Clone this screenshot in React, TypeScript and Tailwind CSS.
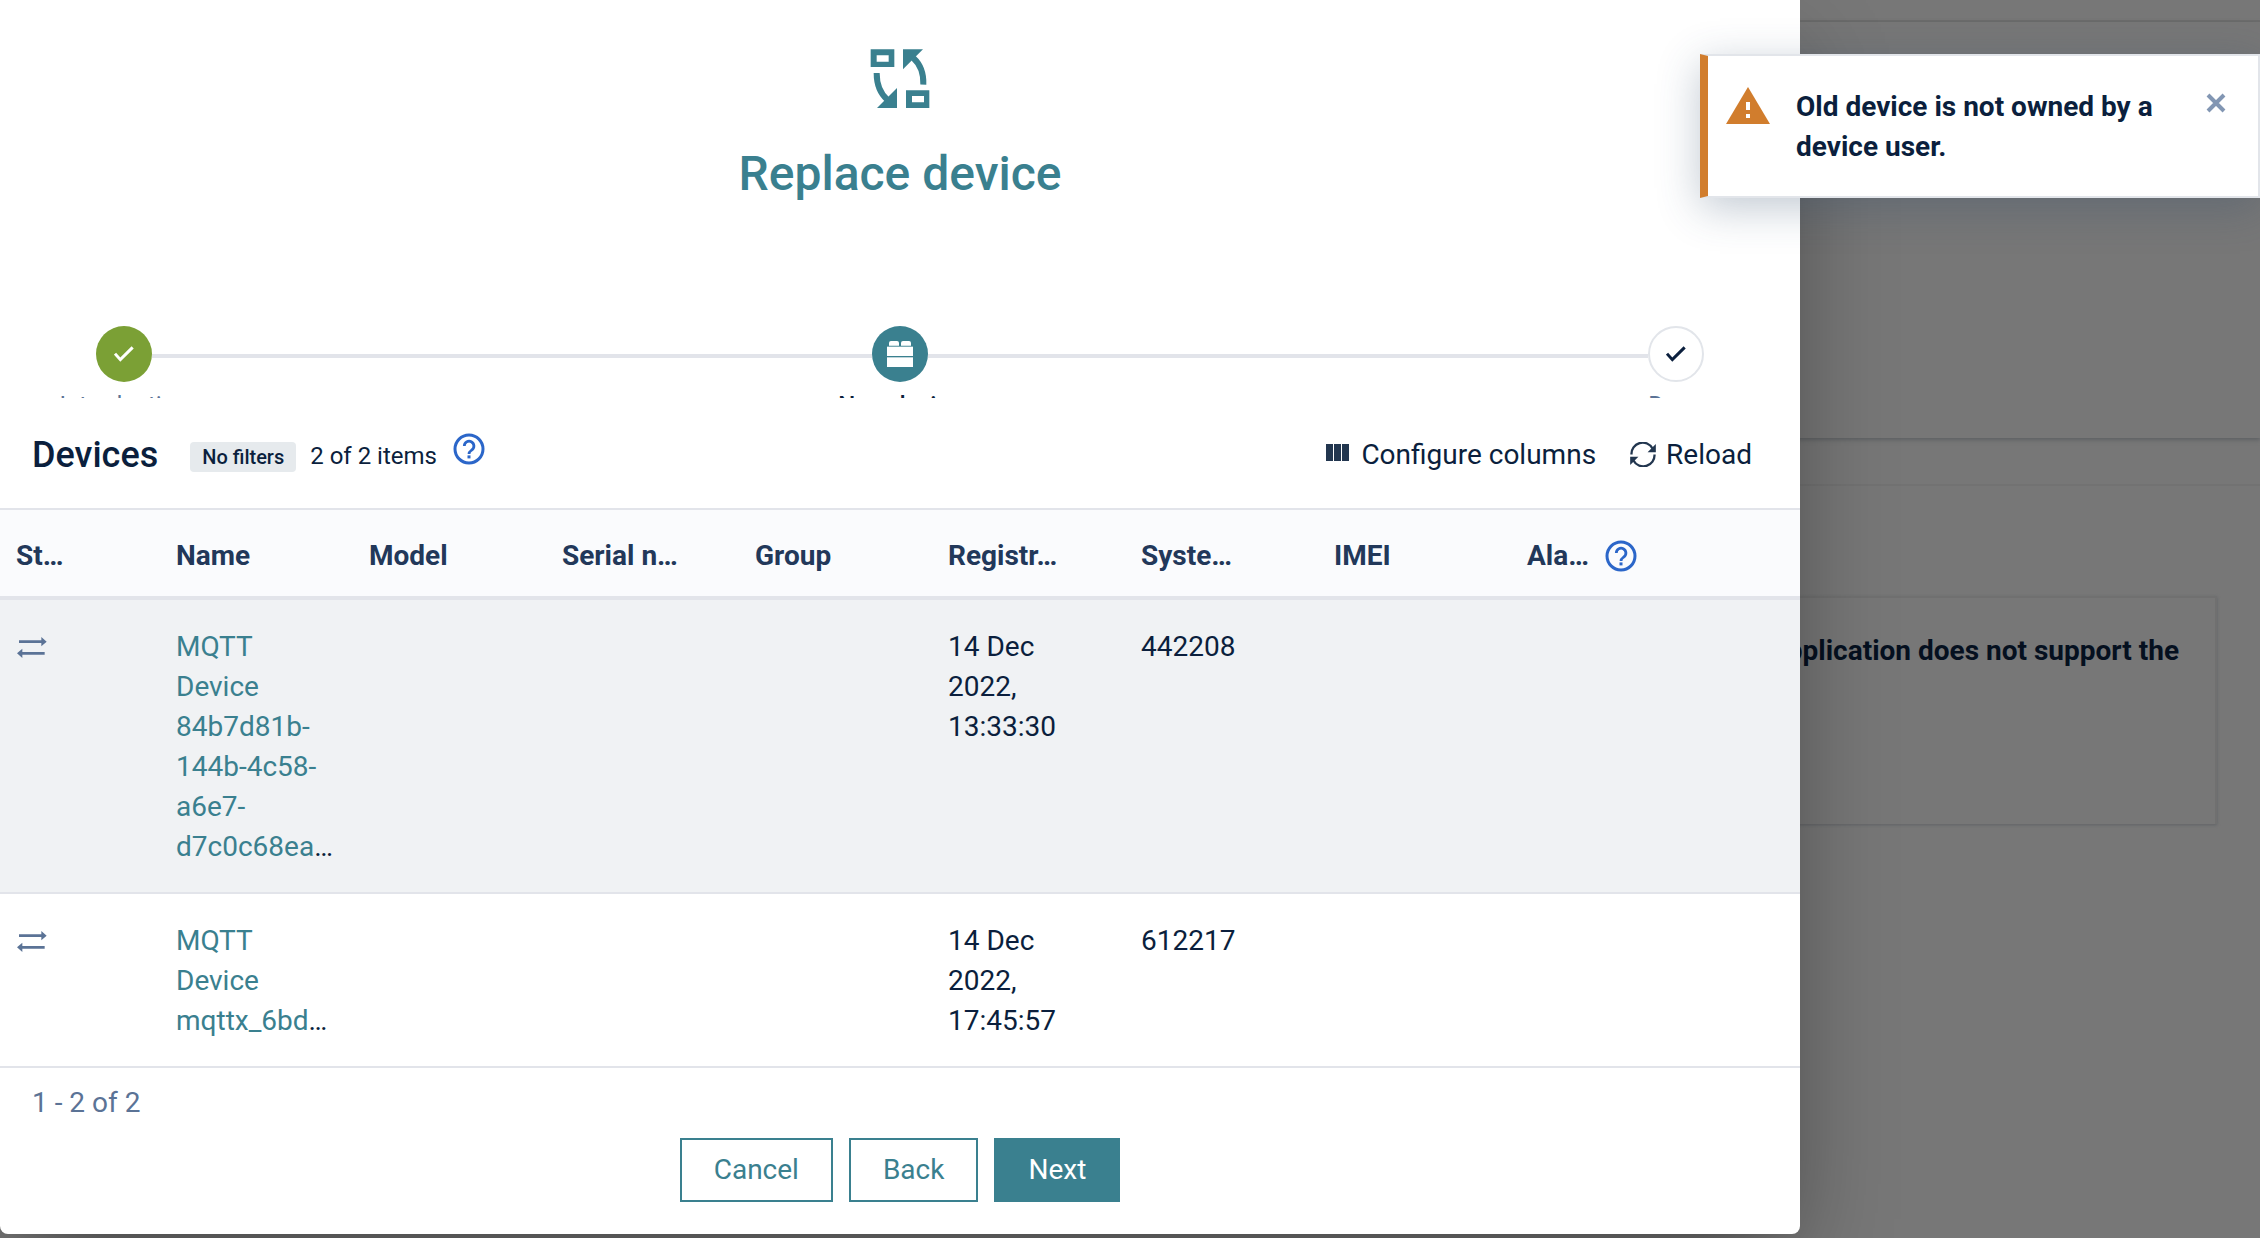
import React from "react";

const HelpIcon = () => (
  <svg viewBox="0 0 32 32" className="size-8" fill="none" aria-hidden="true">
    <circle cx="16" cy="16" r="14" stroke="#2b66c9" strokeWidth="3" />
    <path d="M11.3 13a4.8 4.8 0 1 1 7.6 3.9c-1.7 1.3-2.9 2-2.9 4" stroke="#2b66c9" strokeWidth="2.8" />
    <rect x="14.5" y="22.4" width="3" height="3" fill="#2b66c9" />
  </svg>
);

const CheckIcon = () => (
  <svg viewBox="0 0 60 48" className="h-4 w-5" fill="none" stroke="currentColor" strokeWidth="9" aria-hidden="true">
    <path d="M3 23l16 18L56 4" />
  </svg>
);

const BrickIcon = () => (
  <svg viewBox="0 0 78 81" className="h-[27px] w-[26px]" fill="currentColor" aria-hidden="true">
    <path d="M6 14V6q0-6 6-6h18q6 0 6 6v8zM42 14V6q0-6 6-6h18q6 0 6 6v8z" />
    <rect y="17" width="78" height="28" />
    <rect y="49" width="78" height="29" />
  </svg>
);

const ReplaceIcon = () => (
  <svg viewBox="0 0 180 180" className="size-[60px]" aria-hidden="true">
    <g fill="currentColor">
      <path fillRule="evenodd" d="M2 1h71v53H2zM20 19v19h36V19z" />
      <path fillRule="evenodd" d="M108 124h70v53h-70zM126 141v19h36v-19z" />
      <path d="M99 1h60L99 61z" />
      <path d="M81 117v60H21z" />
    </g>
    <g fill="none" stroke="currentColor" strokeWidth="18">
      <path d="M130 27Q162 56 160 107" />
      <path d="M20 72Q20 124 52 152" />
    </g>
  </svg>
);

const TransferIcon = () => (
  <svg viewBox="0 0 96 69" className="h-[23px] w-8" fill="#5b7396" aria-hidden="true">
    <path d="M9 13h67V3l16 14-16 14V21H9zM86 48H19V38L3 52l16 14V56h67z" />
  </svg>
);

const ColumnsIcon = () => (
  <svg viewBox="0 0 23 17" className="mb-1 h-[17px] w-[23px]" fill="#22364f" aria-hidden="true">
    <path d="M0 0h7v17H0zM8 0h7v17H8zM16 0h7v17h-7z" />
  </svg>
);

const ReloadIcon = () => (
  <svg viewBox="0 0 78 76" className="h-[25px] w-[26px]" aria-hidden="true">
    <g fill="none" stroke="#22364f" strokeWidth="7">
      <path d="M4 38A34 34 0 0 1 68 20" />
      <path d="M74 38A34 34 0 0 1 10 56" />
    </g>
    <path fill="#22364f" d="M78 6v25H53zM0 70V45h25z" />
  </svg>
);

const steps = [
  { label: "Introduction", circle: "bg-[#7ba035] text-white", text: "text-[#5b7396]", icon: <CheckIcon /> },
  { label: "New device", circle: "bg-[#3a808f] text-white", text: "font-medium text-[#0b1f3d]", icon: <BrickIcon /> },
  { label: "Done", circle: "border-2 border-[#e2e5ea] bg-white text-[#0b1f3d]", text: "text-[#5b7396]", icon: <CheckIcon /> },
];

const headers = ["St…", "Name", "Model", "Serial n…", "Group", "Registr…", "Syste…", "IMEI", "Ala…"];

const rows = [
  { name: "MQTT Device 84b7d81b-144b-4c58-a6e7-d7c0c68ea", date: "14 Dec 2022, 13:33:30", system: "442208", bg: "bg-[#f0f2f4]" },
  { name: "MQTT Device mqttx_6bd", date: "14 Dec 2022, 17:45:57", system: "612217", bg: "bg-white" },
];

function Background() {
  return (
    <div className="absolute inset-0 overflow-hidden bg-[#777777]" aria-hidden="true">
      <div className="h-[22px] border-b-2 border-[#6c6c6c]" />
      <div className="h-[416px] shadow-[0_2px_4px_#5d6063]" />
      <div className="h-12 border-b-2 border-[#727272]" />
      <div className="mt-[110px] mr-[43px] h-[228px] border-2 border-b-0 border-[#707070] pt-[33px] pr-[36px] text-right font-bold text-[#05101f] shadow-[0_1px_3px_#606366]">
        application does not support the
      </div>
    </div>
  );
}

function Stepper() {
  return (
    <ol className="mt-[110px] flex h-[72px] justify-between overflow-hidden px-6">
      {steps.map((s, i) => (
        <React.Fragment key={s.label}>
          {i > 0 && <li role="presentation" className="-mx-[72px] mt-7 h-1 flex-1 bg-[#e2e4ea]" />}
          <li className="flex w-[200px] shrink-0 flex-col items-center gap-[11px]">
            <span className={"flex size-14 shrink-0 items-center justify-center rounded-full " + s.circle}>{s.icon}</span>
            <span className={"text-2xl leading-6 " + s.text}>{s.label}</span>
          </li>
        </React.Fragment>
      ))}
    </ol>
  );
}

function Toolbar() {
  return (
    <div className="flex h-[110px] items-center px-8 pt-[3px]">
      <h2 className="text-[36px] leading-10 font-medium">Devices</h2>
      <span className="mt-1 ml-8 flex h-[30px] items-center rounded bg-[#e6eaed] px-3 text-xl leading-6 font-medium">No filters</span>
      <span className="mt-[2px] ml-[14px] text-2xl">2 of 2 items</span>
      <button aria-label="Help" className="mb-3 ml-4"><HelpIcon /></button>
      <button className="ml-auto flex items-center gap-3"><ColumnsIcon />Configure columns</button>
      <button className="mr-4 ml-[34px] flex items-center gap-[10px]"><ReloadIcon />Reload</button>
    </div>
  );
}

function DeviceTable() {
  return (
    <table className="w-full table-fixed border-collapse text-left">
      <colgroup>
        <col className="w-40" />
        {headers.slice(1).map((h) => <col key={h} />)}
        <col className="w-24" />
      </colgroup>
      <thead>
        <tr className="h-[92px] bg-[#fafbfd] text-[#22385a] shadow-[inset_0_2px_#e2e4ea,inset_0_-4px_#e2e4ea]">
          {headers.map((h) => (
            <th key={h} className="px-4 pt-[3px] font-bold">
              {h === "Ala…" ? (
                <div className="flex items-center gap-4">
                  {h}
                  <button aria-label="Help" className="shrink-0"><HelpIcon /></button>
                </div>
              ) : h}
            </th>
          ))}
          <td />
        </tr>
      </thead>
      <tbody>
        {rows.map((r) => (
          <tr key={r.system} className={"align-top shadow-[inset_0_-2px_#e2e4ea] " + r.bg}>
            <td className="px-4 pt-9"><TransferIcon /></td>
            <td className="px-4 pt-[27px] pb-[27px]"><a href="#device" className="text-[#3a808f]">{r.name}</a>…</td>
            <td /><td /><td />
            <td className="px-4 pt-[27px]">{r.date}</td>
            <td className="px-4 pt-[27px]">{r.system}</td>
            <td /><td /><td />
          </tr>
        ))}
      </tbody>
    </table>
  );
}

function Toast() {
  return (
    <div role="alert" className="absolute top-[54px] right-0 flex w-[560px] border-2 border-l-8 border-[#e2e5ea] border-l-[#d17d2d] bg-white pt-[31px] pb-[29px] pl-[18px] shadow-[0_10px_40px_rgba(50,75,105,0.3)]">
      <svg viewBox="0 0 44 37" className="h-[37px] w-11 shrink-0" aria-hidden="true">
        <path fill="#d17d2d" d="M22 0l22 37H0z" />
        <path fill="#fff" d="M20 15h4v8h-4zM20 27h4v4h-4z" />
      </svg>
      <p className="ml-[26px] flex-1 font-bold">Old device is not owned by a device user.</p>
      <button aria-label="Close" className="mt-[6px] mr-8 ml-10 size-5 shrink-0 text-[#8296b3]">
        <svg viewBox="0 0 20 20" stroke="currentColor" strokeWidth="4" aria-hidden="true">
          <path d="M2 2l16 16M18 2L2 18" />
        </svg>
      </button>
    </div>
  );
}

export default function App() {
  return (
    <div className="relative min-h-screen overflow-hidden bg-[#777777] font-['Roboto',sans-serif] text-[28px] leading-10 text-[#0b1f3d]">
      <Background />
      <div className="relative pr-[460px]">
        <div role="dialog" aria-labelledby="dialog-title" className="rounded-b-lg bg-white pb-8 shadow-[0_40px_100px_-20px_rgba(0,0,0,0.45)]">
          <header className="flex flex-col items-center pt-[49px] text-[#3a808f]">
            <ReplaceIcon />
            <h1 id="dialog-title" className="mt-[37px] text-5xl leading-[56px] font-medium">Replace device</h1>
          </header>
          <div className="pt-[14px]"><Stepper /></div>
          <Toolbar />
          <DeviceTable />
          <p className="mt-[15px] px-8 text-[#5b7396]">1 - 2 of 2</p>
          <div className="mt-[15px] flex justify-center gap-4">
            <button className="h-16 border-2 border-[#3a808f] px-8 text-[#3a808f]">Cancel</button>
            <button className="h-16 border-2 border-[#3a808f] px-8 text-[#3a808f]">Back</button>
            <button className="h-16 border-2 border-[#3a808f] bg-[#3a808f] px-8 text-white">Next</button>
          </div>
        </div>
      </div>
      <Toast />
    </div>
  );
}
